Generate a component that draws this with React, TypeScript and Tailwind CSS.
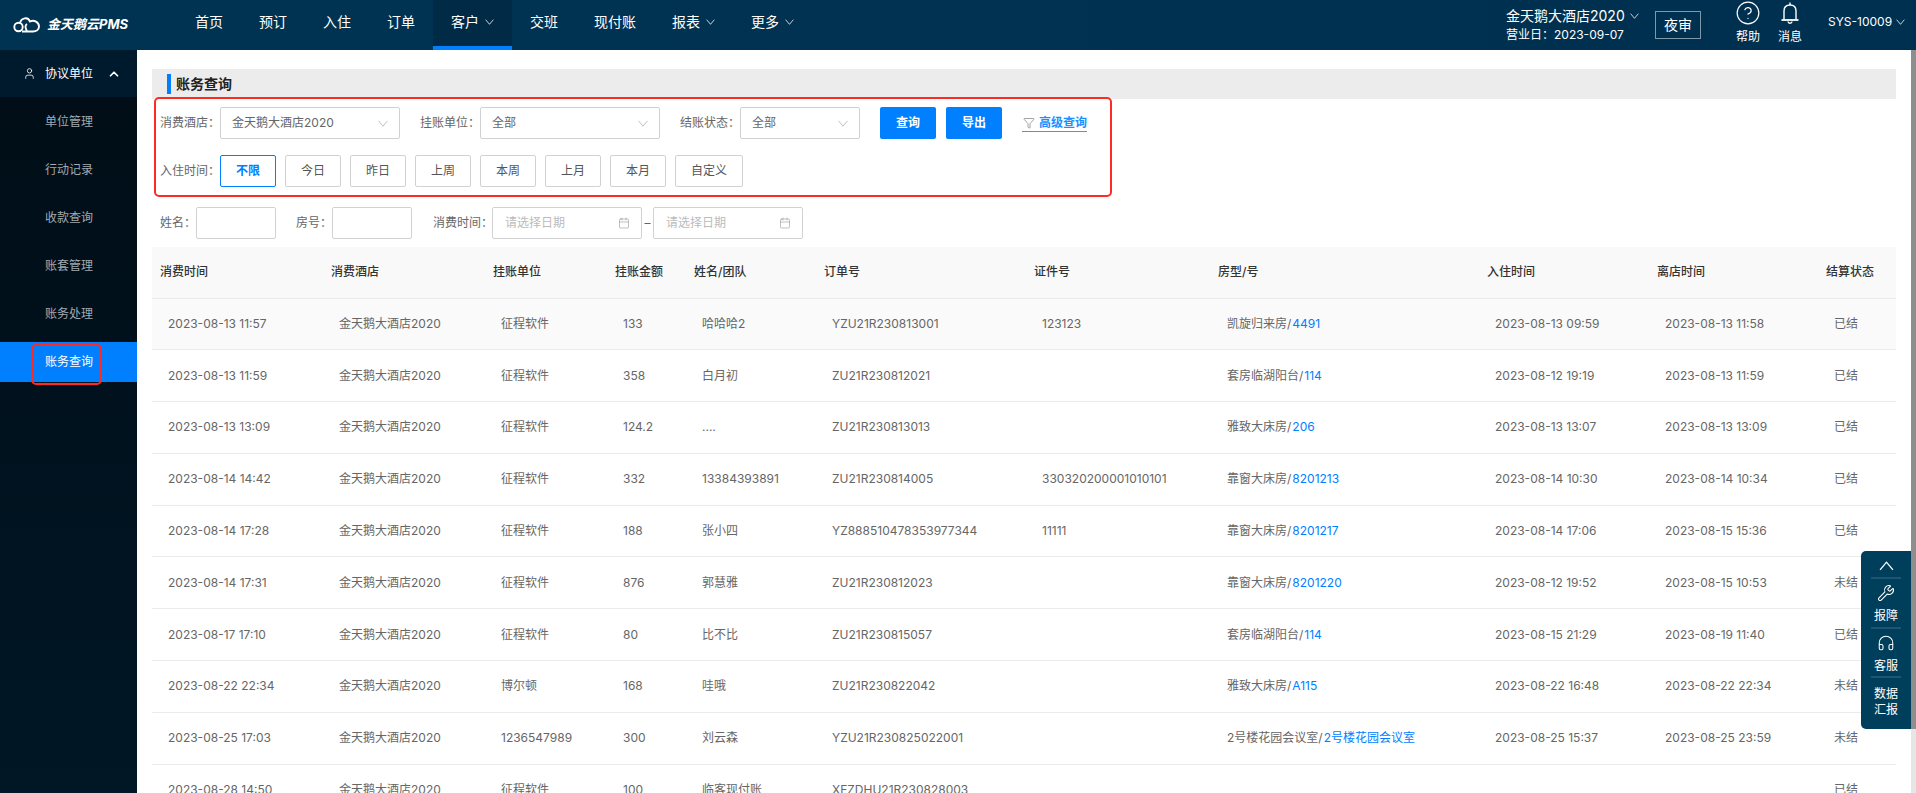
import React from 'react';
import { ChevronUp, User, Calendar, CircleHelp, Wrench, Headphones, Funnel } from 'lucide-react';

const navItems = [
  { label: '首页' },
  { label: '预订' },
  { label: '入住' },
  { label: '订单' },
  { label: '客户', arrow: true, active: true },
  { label: '交班' },
  { label: '现付账' },
  { label: '报表', arrow: true },
  { label: '更多', arrow: true },
];

const sideItems = ['单位管理', '行动记录', '收款查询', '账套管理', '账务处理', '账务查询'];
const timeTabs = ['不限', '今日', '昨日', '上周', '本周', '上月', '本月', '自定义'];

const columns = [
  { title: '消费时间', w: 'w-[171px]' },
  { title: '消费酒店', w: 'w-[162px]' },
  { title: '挂账单位', w: 'w-[122px]' },
  { title: '挂账金额', w: 'w-[79px]' },
  { title: '姓名/团队', w: 'w-[130px]' },
  { title: '订单号', w: 'w-[210px]' },
  { title: '证件号', w: 'w-[184px]' },
  { title: '房型/号', w: 'w-[269px]' },
  { title: '入住时间', w: 'w-[170px]' },
  { title: '离店时间', w: 'w-[169px]' },
  { title: '结算状态', w: 'w-[78px]' },
];

const hotel = '金天鹅大酒店2020';

const rows = [
  ['2023-08-13 11:57', '征程软件', '133', '哈哈哈2', 'YZU21R230813001', '123123', '凯旋归来房', '4491', '2023-08-13 09:59', '2023-08-13 11:58', '已结'],
  ['2023-08-13 11:59', '征程软件', '358', '白月初', 'ZU21R230812021', '', '套房临湖阳台', '114', '2023-08-12 19:19', '2023-08-13 11:59', '已结'],
  ['2023-08-13 13:09', '征程软件', '124.2', '....', 'ZU21R230813013', '', '雅致大床房', '206', '2023-08-13 13:07', '2023-08-13 13:09', '已结'],
  ['2023-08-14 14:42', '征程软件', '332', '13384393891', 'ZU21R230814005', '330320200001010101', '靠窗大床房', '8201213', '2023-08-14 10:30', '2023-08-14 10:34', '已结'],
  ['2023-08-14 17:28', '征程软件', '188', '张小四', 'YZ888510478353977344', '11111', '靠窗大床房', '8201217', '2023-08-14 17:06', '2023-08-15 15:36', '已结'],
  ['2023-08-14 17:31', '征程软件', '876', '郭慧雅', 'ZU21R230812023', '', '靠窗大床房', '8201220', '2023-08-12 19:52', '2023-08-15 10:53', '未结'],
  ['2023-08-17 17:10', '征程软件', '80', '比不比', 'ZU21R230815057', '', '套房临湖阳台', '114', '2023-08-15 21:29', '2023-08-19 11:40', '已结'],
  ['2023-08-22 22:34', '博尔顿', '168', '哇哦', 'ZU21R230822042', '', '雅致大床房', 'A115', '2023-08-22 16:48', '2023-08-22 22:34', '未结'],
  ['2023-08-25 17:03', '1236547989', '300', '刘云森', 'YZU21R230825022001', '', '2号楼花园会议室', '2号楼花园会议室', '2023-08-25 15:37', '2023-08-25 23:59', '未结'],
  ['2023-08-28 14:50', '征程软件', '100', '临客现付账', 'XFZDHU21R230828003', '', '', '', '', '', '已结'],
];

function Chevron({ className, up }: { className?: string; up?: boolean }) {
  return (
    <svg className={className} viewBox="0 0 10 7" fill="none" stroke="currentColor" strokeWidth="0.9">
      <path d={up ? 'M0.5 6.2 L5 0.8 L9.5 6.2' : 'M0.5 0.8 L5 6.2 L9.5 0.8'} />
    </svg>
  );
}

function SelectBox({ value, width }: { value: string; width: string }) {
  return (
    <div className={`flex h-8 items-center justify-between rounded-[2px] border border-[#d2d2d2] pl-[11px] pr-[11px] text-[#666] ${width}`}>
      <span>{value}</span>
      <Chevron className="h-[7px] w-[10px] text-[#bbb]" />
    </div>
  );
}

function DateBox() {
  return (
    <div className="flex h-8 w-[150px] items-center justify-between rounded-[2px] border border-[#d2d2d2] pl-3 pr-[11px] text-[#bbb]">
      <span>请选择日期</span>
      <Calendar className="h-3 w-3 text-[#999]" strokeWidth={1.2} />
    </div>
  );
}

function Logo() {
  return (
    <svg width="28" height="18" viewBox="0 0 28 18" fill="none" stroke="white" strokeWidth="1.9">
      <circle cx="5.5" cy="11" r="4.2" />
      <path d="M7 7 C8 2 15 0 17 5.5 C21 3.5 26 6 26 10.5 C26 14 23 15.5 20 15.5 H9" />
      <path d="M14 15 C12 12 12 9 14 8" />
    </svg>
  );
}

function BellIcon() {
  return (
    <svg width="18" height="24" viewBox="0 0 18 24" fill="none" stroke="white" strokeWidth="1.4">
      <path d="M9 0.5 V3" />
      <path d="M3 17.5 V9 C3 5 5.5 3 9 3 C12.5 3 15 5 15 9 V17.5" />
      <path d="M0.5 18 H17.5" strokeWidth="1.8" />
      <path d="M7 19.5 C7.2 21.8 10.8 21.8 11 19.5" />
    </svg>
  );
}

export default function App() {
  return (
    <div className="flex h-screen flex-col overflow-hidden bg-white text-xs font-['Inter','Noto_Sans_CJK_SC',sans-serif] text-[#666]">
      <header className="flex h-[50px] shrink-0 items-stretch bg-gradient-to-r from-[#003352] to-[#00304f] text-white">
        <div className="flex w-[177px] items-center pl-[13px]">
          <Logo />
          <span className="ml-[6px] text-[13px] font-bold italic">金天鹅云PMS</span>
        </div>
        <nav className="flex text-sm">
          {navItems.map((n) =>
            <div
              key={n.label}
              className={`flex items-center px-[18px] ${n.active ? 'border-b-4 border-[#0080ff] bg-[#002a45] pb-[2px]' : 'pb-[6px]'}`}
            >
              {n.label}
              {n.arrow && <Chevron className="ml-[6px] h-[6px] w-[9px]" />}
            </div>
          )}
        </nav>
        <div className="ml-auto flex items-center">
          <div className="w-[149px]">
            <div className="flex items-center text-sm leading-[18px]">
              {hotel}
              <Chevron className="ml-[5px] h-[6px] w-[9px]" />
            </div>
            <div className="mt-[2px] leading-[16px]">营业日：2023-09-07</div>
          </div>
          <div className="flex h-7 w-[46px] items-center justify-center border border-[#7f98a8] text-sm">夜审</div>
          <div className="ml-[35px] flex w-6 flex-col items-center self-start">
            <CircleHelp className="h-[26px] w-[26px] shrink-0" strokeWidth={1.1} />
            <span className="mt-[3px] leading-4">帮助</span>
          </div>
          <div className="ml-[18px] flex w-6 flex-col items-center self-start pt-[2px]">
            <BellIcon />
            <span className="mt-[3px] leading-4">消息</span>
          </div>
          <div className="ml-[26px] flex w-[88px] items-center pb-[6px]">
            SYS-10009
            <Chevron className="ml-[4px] h-[6px] w-[9px]" />
          </div>
        </div>
      </header>

      <div className="flex min-h-0 flex-1">
        <aside className="w-[137px] shrink-0 bg-gradient-to-b from-[#000d16] to-[#001726] text-[#a3aab0]">
          <div className="mb-[5px] flex h-[47px] items-center bg-[#001a2d] pl-[23px] text-white">
            <User className="h-[13px] w-[13px]" strokeWidth={1.5} />
            <span className="ml-[9px]">协议单位</span>
            <ChevronUp className="ml-[14px] h-[14px] w-[14px]" strokeWidth={3} />
          </div>
          {sideItems.map((s) => {
            const active = s === '账务查询';
            return (
              <div
                key={s}
                className={`relative mb-2 flex h-10 items-center pl-[45px] ${active ? 'bg-[#0080ff] text-white' : ''}`}
              >
                {s}
                {active && <div className="absolute left-[31px] top-[2px] h-[41px] w-[71px] rounded-[5px] border-[2.5px] border-[#ff2a23]" />}
              </div>
            );
          })}
        </aside>

        <main className="relative min-w-0 flex-1 pl-[15px] pr-[15px] pt-[19px]">
          <div className="flex h-[30px] items-center bg-[#ececec] pl-[15px]">
            <div className="h-5 w-1 bg-[#0080ff]" />
            <span className="ml-[5px] text-sm font-bold text-[#222]">账务查询</span>
          </div>

          <div className="relative pl-2 pt-2">
            <div className="absolute -top-[2px] left-[2px] h-[100px] w-[958px] rounded-[5px] border-[2.5px] border-[#ff2a23]" />
            <div className="flex items-center">
              <span className="w-[60px] whitespace-nowrap">消费酒店：</span>
              <SelectBox value={hotel} width="w-[180px]" />
              <span className="ml-5 w-[60px] whitespace-nowrap">挂账单位：</span>
              <SelectBox value="全部" width="w-[180px]" />
              <span className="ml-5 w-[60px] whitespace-nowrap">结账状态：</span>
              <SelectBox value="全部" width="w-[120px]" />
              <button className="ml-5 h-8 w-14 rounded-[2px] bg-[#0080ff] font-bold text-white">查询</button>
              <button className="ml-[10px] h-8 w-14 rounded-[2px] bg-[#0080ff] font-bold text-white">导出</button>
              <div className="ml-5 flex h-[17px] items-center gap-[4px] border-b border-[#888] pl-[1px] font-bold text-[#1890ff]">
                <Funnel className="h-3 w-3 text-[#666]" strokeWidth={1.2} />
                高级查询
              </div>
            </div>
            <div className="mt-4 flex items-center">
              <span className="w-[60px] whitespace-nowrap">入住时间：</span>
              <div className="flex gap-[9px]">
                {timeTabs.map((t, i) => (
                  <div
                    key={t}
                    className={`flex h-8 items-center justify-center rounded-[2px] border ${t === '自定义' ? 'w-[68px]' : 'w-14'} ${i === 0 ? 'border-[#0080ff] font-bold text-[#0080ff]' : 'border-[#d2d2d2] text-[#555]'}`}
                  >
                    {t}
                  </div>
                ))}
              </div>
            </div>
            <div className="mt-5 flex items-center">
              <span className="w-9 whitespace-nowrap">姓名：</span>
              <div className="h-8 w-20 rounded-[2px] border border-[#d2d2d2]" />
              <span className="ml-5 w-9 whitespace-nowrap">房号：</span>
              <div className="h-8 w-20 rounded-[2px] border border-[#d2d2d2]" />
              <span className="ml-[21px] w-[59px] whitespace-nowrap">消费时间：</span>
              <DateBox />
              <span className="mx-[2px] w-[7px] text-center">–</span>
              <DateBox />
            </div>
          </div>

          <table className="mt-2 w-full table-fixed border-collapse">
            <thead>
              <tr className="h-[51px] bg-[#f9f9f9] text-[#333]">
                {columns.map((c) => (
                  <th key={c.title} className={`${c.w} pl-2 text-left font-medium`}>{c.title}</th>
                ))}
              </tr>
            </thead>
            <tbody>
              {rows.map((r, i) => (
                <tr key={r[0]} className={`h-[51.8px] border-t border-[#ebebeb] ${i === 0 ? 'bg-[#fafafa]' : ''}`}>
                  <td className="pl-4">{r[0]}</td>
                  <td className="pl-4">{hotel}</td>
                  <td className="pl-4">{r[1]}</td>
                  <td className="pl-4">{r[2]}</td>
                  <td className="pl-4">{r[3]}</td>
                  <td className="pl-4">{r[4]}</td>
                  <td className="pl-4">{r[5]}</td>
                  <td className="pl-[17px]">
                    {r[6] && <>{r[6]}/<span className="ml-[1px] text-[#0080ff]">{r[7]}</span></>}
                  </td>
                  <td className="pl-4">{r[8]}</td>
                  <td className="pl-4">{r[9]}</td>
                  <td className="pl-4">{r[10]}</td>
                </tr>
              ))}
            </tbody>
          </table>

          <div className="absolute right-0 top-[501px] flex h-[178px] w-[50px] flex-col items-center rounded-l-[5px] bg-[#003f5c] text-white">
            <Chevron up className="mt-[10px] h-[10px] w-[15px]" />
            <div className="mt-[6px] h-[2px] w-[30px] bg-[#1f5570]" />
            <Wrench className="mt-[5px] h-[18px] w-[18px]" strokeWidth={1.4} />
            <span className="mt-[6px] leading-4">报障</span>
            <div className="mt-[3px] h-[2px] w-[30px] bg-[#1f5570]" />
            <Headphones className="mt-[5px] h-[18px] w-[18px]" strokeWidth={1.4} />
            <span className="mt-[6px] leading-4">客服</span>
            <div className="mt-[2px] h-[2px] w-[30px] bg-[#1f5570]" />
            <span className="mt-[8px] leading-4">数据</span>
            <span className="leading-4">汇报</span>
          </div>
        </main>

        <div className="flex w-[5px] shrink-0 flex-col bg-[#e6e6e6]">
          <div className="h-[679px] bg-[#8e8e8e]" />
        </div>
      </div>
    </div>
  );
}
